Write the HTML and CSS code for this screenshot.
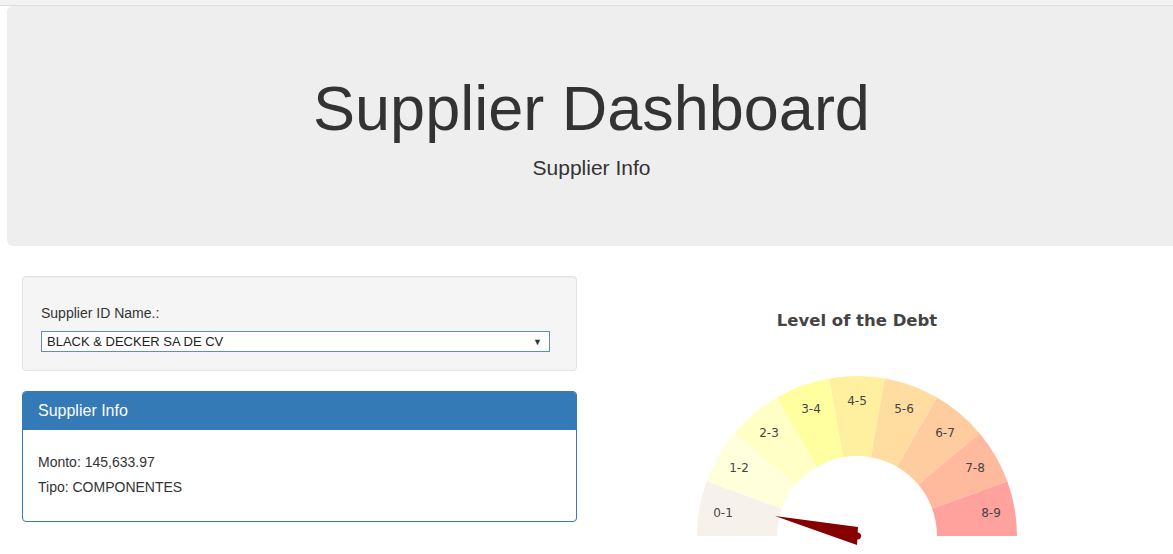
FILE: index.html
```html
<!DOCTYPE html>
<html>
<head>
<meta charset="utf-8">
<title>Supplier Dashboard</title>
<link rel="stylesheet" href="styles.css">
</head>
<body>
<div class="topstrip"></div>
<div class="jumbotron">
  <h1 class="jt-title">Supplier Dashboard</h1>
  <p class="jt-sub">Supplier Info</p>
</div>
<div class="main">
  <div class="leftcol">
    <div class="well">
      <div class="field-label">Supplier ID Name.:</div>
      <div class="select">
        <span class="select-text">BLACK &amp; DECKER SA DE CV</span>
        <span class="select-arrow">▼</span>
      </div>
    </div>
    <div class="panel">
      <div class="panel-heading">Supplier Info</div>
      <div class="panel-body">
        <p class="info-line">Monto: 145,633.97</p>
        <p class="info-line">Tipo: COMPONENTES</p>
      </div>
    </div>
  </div>
  <div class="rightcol">
    <div class="chart-title">Level of the Debt</div>
    <svg class="gauge" width="340" height="180" viewBox="687 370 340 180" xmlns="http://www.w3.org/2000/svg">
      <path fill="#f6f1eb" d="M697 536 A160 160 0 0 1 706.65 481.28 L781.82 508.64 A80 80 0 0 0 777 536 Z"/>
      <path fill="#ffffdb" d="M706.65 481.28 A160 160 0 0 1 734.44 433.15 L795.72 484.58 A80 80 0 0 0 781.82 508.64 Z"/>
      <path fill="#ffffc6" d="M734.44 433.15 A160 160 0 0 1 777 397.44 L817 466.72 A80 80 0 0 0 795.72 484.58 Z"/>
      <path fill="#ffff9f" d="M777 397.44 A160 160 0 0 1 829.22 378.43 L843.11 457.22 A80 80 0 0 0 817 466.72 Z"/>
      <path fill="#fff0a0" d="M829.22 378.43 A160 160 0 0 1 884.78 378.43 L870.89 457.22 A80 80 0 0 0 843.11 457.22 Z"/>
      <path fill="#ffdca0" d="M884.78 378.43 A160 160 0 0 1 937 397.44 L897 466.72 A80 80 0 0 0 870.89 457.22 Z"/>
      <path fill="#ffcc9f" d="M937 397.44 A160 160 0 0 1 979.56 433.15 L918.28 484.58 A80 80 0 0 0 897 466.72 Z"/>
      <path fill="#ffb99c" d="M979.56 433.15 A160 160 0 0 1 1007.35 481.28 L932.18 508.64 A80 80 0 0 0 918.28 484.58 Z"/>
      <path fill="#ffa29d" d="M1007.35 481.28 A160 160 0 0 1 1017 536 L937 536 A80 80 0 0 0 932.18 508.64 Z"/>
      <g class="seg-label">
        <text x="723" y="517">0-1</text>
        <text x="739" y="472">1-2</text>
        <text x="769" y="437">2-3</text>
        <text x="811" y="413">3-4</text>
        <text x="857" y="405">4-5</text>
        <text x="904" y="413">5-6</text>
        <text x="945" y="437">6-7</text>
        <text x="975" y="472">7-8</text>
        <text x="991" y="517">8-9</text>
      </g>
      <path fill="#850000" d="M775 516 L858 527 L857 545 Z"/>
      <circle cx="857.5" cy="536" r="3.5" fill="#850000"/>
    </svg>
  </div>
</div>
</body>
</html>
```

FILE: styles.css
```css
html, body {
  margin: 0;
  padding: 0;
  overflow: hidden;
  background: #fff;
  font-family: "Liberation Sans", Arial, sans-serif;
  font-size: 14px;
  color: #333;
}

.topstrip {
  height: 5px;
  background: #f3f3f3;
  border-bottom: 1px solid #dddddd;
}

.jumbotron {
  margin: 0 -30px 30px 7px;
  background: #eeeeee;
  border-radius: 6px;
  padding: 48px 0;
  text-align: center;
}

.jt-title {
  margin: 20px 0 10px 0;
  font-size: 63px;
  font-weight: 400;
  line-height: 69px;
  color: #333;
  padding-right: 27px;
}

.jt-sub {
  margin: 0 0 15px 0;
  font-size: 21px;
  line-height: 30px;
  color: #333;
  padding-right: 27px;
}

.main {
  display: flex;
  align-items: flex-start;
}

.leftcol {
  width: 555px;
  margin-left: 22px;
  display: flex;
  flex-direction: column;
  gap: 20px;
}

.well {
  background: #f5f5f5;
  border: 1px solid #e3e3e3;
  border-radius: 4px;
  padding: 26px 18px 18px 18px;
  box-shadow: inset 0 1px 1px rgba(0,0,0,0.03);
}

.field-label {
  line-height: 20px;
  margin-bottom: 8px;
}

.select {
  height: 19px;
  border: 1px solid #5f8bd6;
  background: #fff;
  display: flex;
  align-items: center;
  justify-content: space-between;
  padding: 0 6px 0 5px;
  box-sizing: content-box;
  width: 496px;
  font-size: 13px;
  color: #222;
}

.select-text {
  line-height: 19px;
}

.select-arrow {
  font-size: 9px;
  color: #333;
  margin-right: 1px;
}

.panel {
  border: 1px solid #337ab7;
  border-radius: 4px;
  overflow: hidden;
}

.panel-heading {
  background: #337ab7;
  color: #fff;
  font-size: 16px;
  line-height: 18px;
  padding: 10px 15px 10px 15px;
}

.panel-body {
  padding: 22px 15px 24px 15px;
}

.info-line {
  margin: 0;
  line-height: 20px;
}

.info-line + .info-line {
  margin-top: 5px;
}

.rightcol {
  width: 520px;
  margin-left: 20px;
  display: flex;
  flex-direction: column;
  align-items: center;
}

.chart-title {
  margin-top: 35px;
  font-family: "DejaVu Sans", Verdana, sans-serif;
  font-weight: bold;
  font-size: 16.5px;
  line-height: 20px;
  color: #444;
}

.gauge {
  display: block;
  margin-top: 39px;
}

.seg-label text {
  font-family: "DejaVu Sans", Verdana, sans-serif;
  font-size: 12px;
  fill: #444;
  text-anchor: middle;
}
```
